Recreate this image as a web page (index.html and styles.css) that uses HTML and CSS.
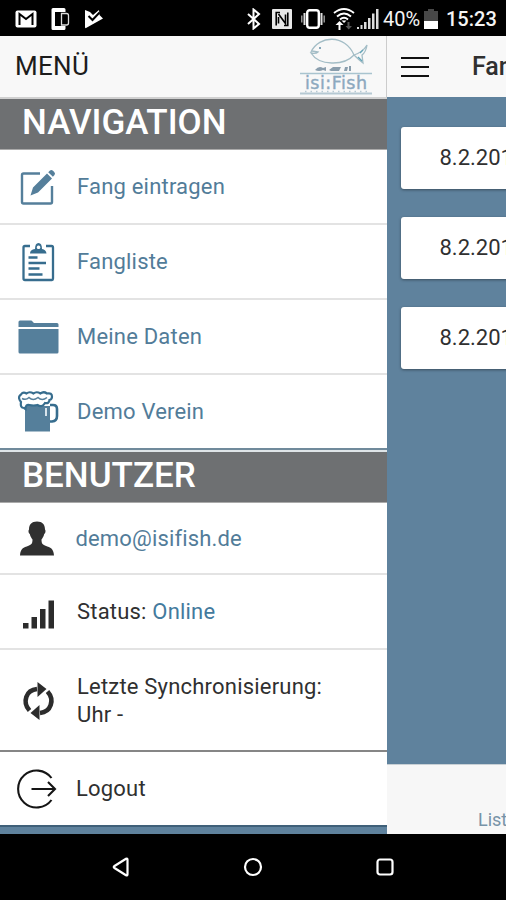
FILE: index.html
```html
<!DOCTYPE html>
<html lang="de">
<head>
  <meta charset="UTF-8" />
  <meta name="viewport" content="width=device-width, initial-scale=1" />
  <title>isi:Fish</title>
  <link rel="stylesheet" href="styles.css">
</head>
<body>
  <div class="statusbar">
    <div class="status-left">
      <svg width="22" height="18" viewBox="0 0 22 18"><rect x=".5" y=".5" width="21" height="17" rx="2" fill="#fff"/><path d="M4.500 15V4l6.500 5 6.500-5v11" fill="none" stroke="#000" stroke-width="2"/></svg>
      <svg width="19" height="24" viewBox="0 0 19 24"><path d="M2 1h11q1.500 0 1.500 1.500V5H4v14h10.500v2.500q0 1.500-1.500 1.500H2Q.5 23 .5 21.500v-19Q.5 1 2 1z" fill="#fff"/><path d="M10.500 6.500h5q2 0 2 2V16q0 2-2 2h-5z" fill="none" stroke="#ddd" stroke-width="1.300"/></svg>
      <svg width="20" height="20" viewBox="0 0 20 20"><path d="M1 1l5 2 3 3 6-5 .5 5L19 9.500 2 19q-1 .5-1-1z" fill="#fff"/><path d="M4.500 7l4 4L15.500 3.500" fill="none" stroke="#000" stroke-width="2"/></svg>
    </div>
    <div class="status-right">
      <svg class="bt" width="14" height="22" viewBox="0 0 14 22"><path d="M1 6l11 10-5.500 4.500v-19L12 6 1 16" fill="none" stroke="#fff" stroke-width="2"/></svg>
      <svg class="nfc" width="20" height="20" viewBox="0 0 20 20"><rect width="20" height="20" rx="1" fill="#e8e8e8"/><path d="M8 3.500H4.200v13M6.500 5l7 9.500V5.500M12 16.500h3.800v-13M6.500 14.500V8" fill="none" stroke="#000" stroke-width="1.600"/></svg>
      <svg class="vib" width="24" height="22" viewBox="0 0 24 22"><rect x="6.200" y="2.200" width="11.600" height="17.600" rx="2.500" fill="none" stroke="#fff" stroke-width="2.400"/><path d="M3.500 5v12M20.500 5v12" stroke="#ddd" stroke-width="2"/><path d="M.8 7.500v7M23.200 7.500v7" stroke="#aaa" stroke-width="1.300"/></svg>
      <svg class="wifi" width="22" height="22" viewBox="0 0 22 22"><g fill="none" stroke="#fff" stroke-width="1.900"><path d="M1 5q10-8 20 0M4 8.500q7-6 14 0M7 11.500q4-3.500 8 0"/></g><path d="M8.500 12.500h5L11 15z" fill="#fff"/><path d="M5.500 22v-5h-3l4-4 4 4h-3v5z" fill="#fff"/><path d="M14.500 14v4h-2l3.200 3.500L19 18h-2.500v-4z" fill="#555"/></svg>
      <svg class="sig" width="22" height="22" viewBox="0 0 22 22"><path d="M0 19h2v2H0zM3.500 17h2v4h-2zM7 14h2.500v7H7zM11 10h2.500v11H11zM15 5.500h2.500V21H15zM19 1h2.500v20H19z" fill="#ddd"/></svg>
      <span class="percent">40%</span>
      <svg class="bat" width="14" height="20" viewBox="0 0 14 20"><path d="M4 0h6v2h4v10H0V2h4z" fill="#484848"/><path d="M0 12h14v8H0z" fill="#fff"/></svg>
      <span class="clock">15:23</span>
    </div>
  </div>

  <div class="app">
    <aside class="menu">
      <header class="menu-header">
        <h1>MENÜ</h1>
        <svg class="logo" width="76" height="59" viewBox="0 0 76 59">
          <g fill="none" stroke="#a3bdc6" stroke-width="1.300">
            <path d="M12 14C20-3 46-4 55 17C45 28 20 28 12 15q5 1 7-1l-6-1"/>
            <path d="M55 17q9-3 13-10-1 7-5 10l1 8q-4-3-9-8z"/>
            <path d="M59 19l4 4M61 15l3-3" stroke="#64a5b9"/>
          </g>
          <circle cx="21" cy="10" r="1" fill="#608ba5"/>
          <g fill="#8a9ead"><path d="M16 32q4-5 8-2l3-1v4l-3-1q-4 2-8 0zM30 32l4-3 8 0-2 4h-8zM46 29h3l-1 4h-3zM50 28h2v5h-2z"/></g>
          <path d="M1 35.500h72" stroke="#a9c4cf" stroke-width="1.500"/>
          <text x="6" y="51" textLength="62">isi:Fish</text>
          <path d="M1 55.500h72" stroke="#b6c9d3" stroke-width="1.800"/>
          <path d="M6 53.500h64" stroke="#b6c9d3" stroke-width="1.500" stroke-dasharray="1.500 4"/>
        </svg>
      </header>

      <h2>NAVIGATION</h2>
      <ul class="nav">
        <li>
          <svg width="42" height="42" viewBox="0 0 42 42"><path d="M22 7.500H5.500Q4 7.500 4 9v27q0 1.500 1.500 1.500h27Q34 37.500 34 36V20" fill="none" stroke="#557f9b" stroke-width="2.400"/><path d="M12.500 29.500l2.500-8L29 7.500l5 5L20 26.500zM30.200 6.200l1.800-1.700q1.500-1.200 3 .2l1.200 1.200q1.500 1.500.3 3l-1.600 1.900z" fill="#557f9b"/></svg>
          <span>Fang eintragen</span>
        </li>
        <li>
          <svg width="42" height="42" viewBox="0 0 42 42"><g fill="none" stroke="#376d8e" stroke-width="2.300"><path d="M12 5H7Q5.500 5 5.500 6.500V37.500Q5.500 39 7 39h27q0-.0 0 0 1 0 1-1.500V6.500Q35 5 33.500 5H28"/><path d="M10.500 16.500h9M10.500 22h17.500M10.500 27.500h11M10.500 33.500h14"/></g><path d="M12 12.500q0-4 5-4.500 0-6 3.500-6T24 8q4 .5 4.500 4.500zM20.500 4.500a1.800 1.800 0 1 0 .1 0z" fill="#376d8e" fill-rule="evenodd"/></svg>
          <span>Fangliste</span>
        </li>
        <li>
          <svg width="42" height="42" viewBox="0 0 42 42"><path d="M.5 11V6q0-1.500 1.500-1.500h11q1 0 1.500 1L16 7h23q1.500 0 1.500 1.500V11zM.5 13h40v23q0 1.500-1.500 1.500H2Q.5 37.500.5 36z" fill="#557f9b"/></svg>
          <span>Meine Daten</span>
        </li>
        <li>
          <svg width="42" height="42" viewBox="0 0 42 42"><path d="M7 15h25v25.500H7z" fill="#557f9b"/><path d="M32 14h3q4 0 4 4v7q0 5-5 5.500h-2" fill="none" stroke="#376d8e" stroke-width="2.600"/><path d="M6 17Q2 17 3 11-1 6 3 3.500q2-3 5.500-1 3-2.500 7 0 3-2.500 7 0 3-2.500 6.500 0 5-1 5 3 0 3-2.500 3.500-.5 4-4.500 3-3 5-7.500 2-4 1-8 0-4-1-4 4z" fill="#fff" stroke="#376d8e" stroke-width="2.200"/><path d="M4 7.500q4 2 7-1 4 4 9 0 4 4 9 0" fill="none" stroke="#557f9b" stroke-width="1.500"/><path d="M28 17v8" stroke="#e8f0f5" stroke-width="1.800"/></svg>
          <span>Demo Verein</span>
        </li>
      </ul>

      <h2 class="second">BENUTZER</h2>
      <ul class="user">
        <li class="mail">
          <svg width="42" height="42" viewBox="0 0 42 42"><path d="M19 3.500c5.500 0 8 3 8 8 1 1 .5 4-.8 4.500-.7 3-1.700 4-2.700 5.500 0 4 1 5 4 6.200 5 1.800 8 2.500 8.500 9.800H2c.5-7.300 3.500-8 8.500-9.800 3-1.200 4-2.200 4-6.200-1-1.500-2-2.500-2.700-5.500-1.300-.5-1.800-3.500-.8-4.500 0-5 2.500-8 8-8z" fill="#303030"/></svg>
          <span>demo@isifish.de</span>
        </li>
        <li>
          <svg width="42" height="42" viewBox="0 0 42 42"><path d="M5 32h5.500v5.500H5zM13.500 26H19v11.500h-5.500zM22 18h5.500v19.500H22zM30.500 9.500H36v28h-5.500z" fill="#2c2c2c"/></svg>
          <span>Status: <a>Online</a></span>
        </li>
        <li class="sync">
          <svg width="42" height="42" viewBox="0 0 42 42"><g fill="none" stroke="#2c2c2c" stroke-width="4.600"><path d="M11.500 30.500C4 22 8 10 19 9"/><path d="M29.500 11.500C37 20 33 32 22 33"/></g><path d="M19.500 2v15l9-8zM21.500 40V25l-9 8z" fill="#2c2c2c"/></svg>
          <span>Letzte Synchronisierung:<br>Uhr -</span>
        </li>
        <li class="logout">
          <svg width="42" height="42" viewBox="0 0 42 42"><path d="M34.500 10A18.500 18.500 0 1 0 34.500 32M14.500 21h24M31 14l7 7-7 7" fill="none" stroke="#151515" stroke-width="2.100"/></svg>
          <span>Logout</span>
        </li>
      </ul>
    </aside>

    <main class="page">
      <header class="page-header">
        <div class="burger"><i></i><i></i><i></i></div>
        <span class="title">Fang</span>
      </header>
      <div class="catches">
        <div class="card">8.2.2018</div>
        <div class="card">8.2.2018</div>
        <div class="card">8.2.2018</div>
      </div>
      <footer class="tabs">Liste</footer>
    </main>
  </div>

  <div class="navbar">
    <svg width="20" height="20" viewBox="0 0 20 20"><path d="M3.500 9L15 1.800q1.500-.8 1.500 1v14.400q0 1.800-1.500 1L3.500 11q-1.500-1 0-2z"/></svg>
    <svg width="20" height="20" viewBox="0 0 20 20"><circle cx="10" cy="10" r="8"/></svg>
    <svg width="20" height="20" viewBox="0 0 20 20"><rect x="2.500" y="2.500" width="15" height="15" rx="2.500"/></svg>
  </div>
</body>
</html>
```
FILE: styles.css
```css
:root {
  --blue: #5f829d;
  --link: #527c99;
  --gray: #6e7072;
  font-family: Roboto, "Liberation Sans", sans-serif;
}

* {
  box-sizing: border-box;
  margin: 0;
  padding: 0;
}

body {
  width: 506px;
  height: 900px;
  overflow: hidden;
  display: flex;
  flex-direction: column;
  background: #000;
  color: #303030;
}

svg {
  display: block;
  flex: none;
}

/* android status bar */
.statusbar {
  height: 36px;
  display: flex;
  align-items: center;
  justify-content: space-between;
  padding: 1px 11px 0 15px;
  color: #f4f4f4;
  font-size: 20px;
  font-weight: 500;
}

.status-left, .status-right {
  display: flex;
  align-items: center;
}

.status-left { gap: 14px; }
.bt { margin-right: 11px; }
.nfc { margin-right: 9px; }
.vib { margin-right: 8px; }
.wifi { margin-right: 2px; }
.sig { margin-right: 4px; }
.percent { width: 41px; font-size: 20px; font-weight: 400; }
.clock { width: 49px; margin-left: 8px; }

.app {
  flex: 1;
  min-height: 0;
  display: flex;
}

/* side menu */
.menu {
  width: 387px;
  flex: none;
  background: var(--blue);
}

.menu-header {
  height: 63px;
  display: flex;
  justify-content: space-between;
  padding: 2px 11px 0 15px;
  background: #f8f8f8;
  border-bottom: 2px solid #d0d0d0;
  border-right: 1px solid #ccc;
}

h1 {
  color: #1c1c1c;
  font-size: 26px;
  font-weight: 400;
  letter-spacing: 0.3px;
  line-height: 57px;
}

.logo text {
  font-family: "DejaVu Sans", sans-serif;
  font-size: 17.5px;
  fill: #8da9bf;
  stroke: #8da9bf;
  stroke-width: 0.4px;
}

h2 {
  height: 51px;
  padding-left: 22px;
  background: var(--gray);
  border-bottom: 1px solid #aaa;
  color: #fff;
  font-size: 35px;
  font-weight: 500;
  line-height: 47px;
}

h2.second {
  height: 53px;
  border-top: 2px solid #dfe5e8;
}

ul {
  list-style: none;
  background: #fff;
}

li {
  height: 75px;
  display: flex;
  align-items: center;
  padding: 1px 0 0 18px;
  gap: 17px;
  border-bottom: 2px solid #e3e3e3;
  font-size: 22px;
  letter-spacing: 0.2px;
  line-height: 28px;
}

.nav li, .mail, a { color: var(--link); }
.nav li:last-child { border-bottom-color: #708a9b; }
a { color: #437a9d; }
.user .mail { height: 72px; gap: 15.5px; letter-spacing: 0.15px; }
.user .sync { height: 102px; border-bottom-color: #868686; }
.user .logout { height: 75px; padding-left: 17px; border-bottom-color: #3f6079; }

/* page behind the menu */
.page {
  flex: 1;
  min-width: 0;
  overflow: hidden;
  display: flex;
  flex-direction: column;
  background: var(--blue);
}

.page-header {
  height: 61px;
  display: flex;
  align-items: center;
  padding-left: 14px;
  gap: 43px;
  background: #f8f8f8;
}

.burger {
  width: 28px;
  flex: none;
  display: grid;
  gap: 7px;
}

.burger i {
  height: 2px;
  background: #111;
}

.title {
  font-size: 25px;
  font-weight: 500;
}

.catches {
  flex: 1;
  padding: 30px 0 0 14px;
}

.card {
  width: 200px;
  height: 62px;
  margin-bottom: 28px;
  padding-left: 38.5px;
  background: #fff;
  border-radius: 3px;
  box-shadow: 0 1px 3px rgba(0, 0, 0, 0.4);
  font-size: 22px;
  line-height: 61px;
}

.tabs {
  height: 70px;
  padding: 44px 0 0 91px;
  background: #f7f7f7;
  border-top: 1px solid #c8d0d5;
  color: #7793a8;
  font-size: 18px;
  line-height: 22px;
}

/* android buttons */
.navbar {
  height: 66px;
  display: flex;
  align-items: center;
  justify-content: center;
  gap: 112px;
}

.navbar svg {
  fill: none;
  stroke: #fff;
  stroke-width: 2.2;
}
```
